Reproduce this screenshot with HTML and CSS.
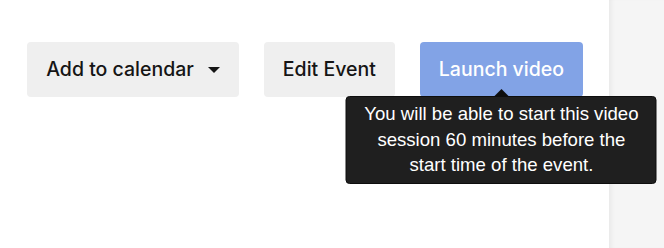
FILE: index.html
```html
<!DOCTYPE html>
<html>
<head>
<meta charset="utf-8">
<link rel="stylesheet" href="styles.css">
</head>
<body>
<div class="page">
  <main class="main">
    <div class="actions">
      <button class="btn btn-gray">Add to calendar <span class="caret"></span></button>
      <button class="btn btn-gray">Edit Event</button>
      <div class="launch-wrap">
        <button class="btn btn-blue">Launch video</button>
        <div class="tooltip">You will be able to start this video session 60 minutes before the start time of the event.</div>
      </div>
    </div>
  </main>
  <aside class="side"></aside>
</div>
</body>
</html>
```
FILE: styles.css
```css
html, body {
  margin: 0;
  padding: 0;
  background: #ffffff;
}
.page {
  display: flex;
  width: 664px;
  height: 248px;
}
.main {
  flex: 1;
  padding: 42px 26px 0 0;
  display: flex;
  justify-content: flex-end;
  align-items: flex-start;
}
.side {
  width: 55px;
  background: #f5f5f5;
  box-shadow: inset 5px 0 5px -3px rgba(0,0,0,0.06);
}
.actions {
  display: flex;
  gap: 25px;
  align-items: flex-start;
}
.btn {
  font-family: Inter, "Liberation Sans", sans-serif;
  font-size: 19.5px;
  font-weight: 500;
  line-height: 23px;
  height: 55px;
  padding: 0 19px;
  border: none;
  border-radius: 4px;
  display: flex;
  align-items: center;
  cursor: pointer;
}
.btn-gray {
  background: #efefef;
  color: #151515;
}
.btn-blue {
  background: #82a3e6;
  color: #ffffff;
}
.caret {
  display: inline-block;
  width: 0;
  height: 0;
  margin-left: 14px;
  border-left: 6px solid transparent;
  border-right: 6px solid transparent;
  border-top: 6px solid #151515;
}
.launch-wrap {
  position: relative;
}
.tooltip {
  position: absolute;
  top: 54px;
  left: 50%;
  transform: translateX(-50%);
  width: 311px;
  box-sizing: border-box;
  padding: 4px 15px 5px;
  background: #1f1f1f;
  border: 1px solid #0e0e0e;
  border-radius: 4px;
  color: #ffffff;
  font-family: "Liberation Sans", Arial, sans-serif;
  font-size: 18.6px;
  line-height: 25.5px;
  text-align: center;
}
.tooltip::before {
  content: "";
  position: absolute;
  top: -8px;
  left: 50%;
  margin-left: -8px;
  border-left: 8px solid transparent;
  border-right: 8px solid transparent;
  border-bottom: 8px solid #0e0e0e;
}
```
